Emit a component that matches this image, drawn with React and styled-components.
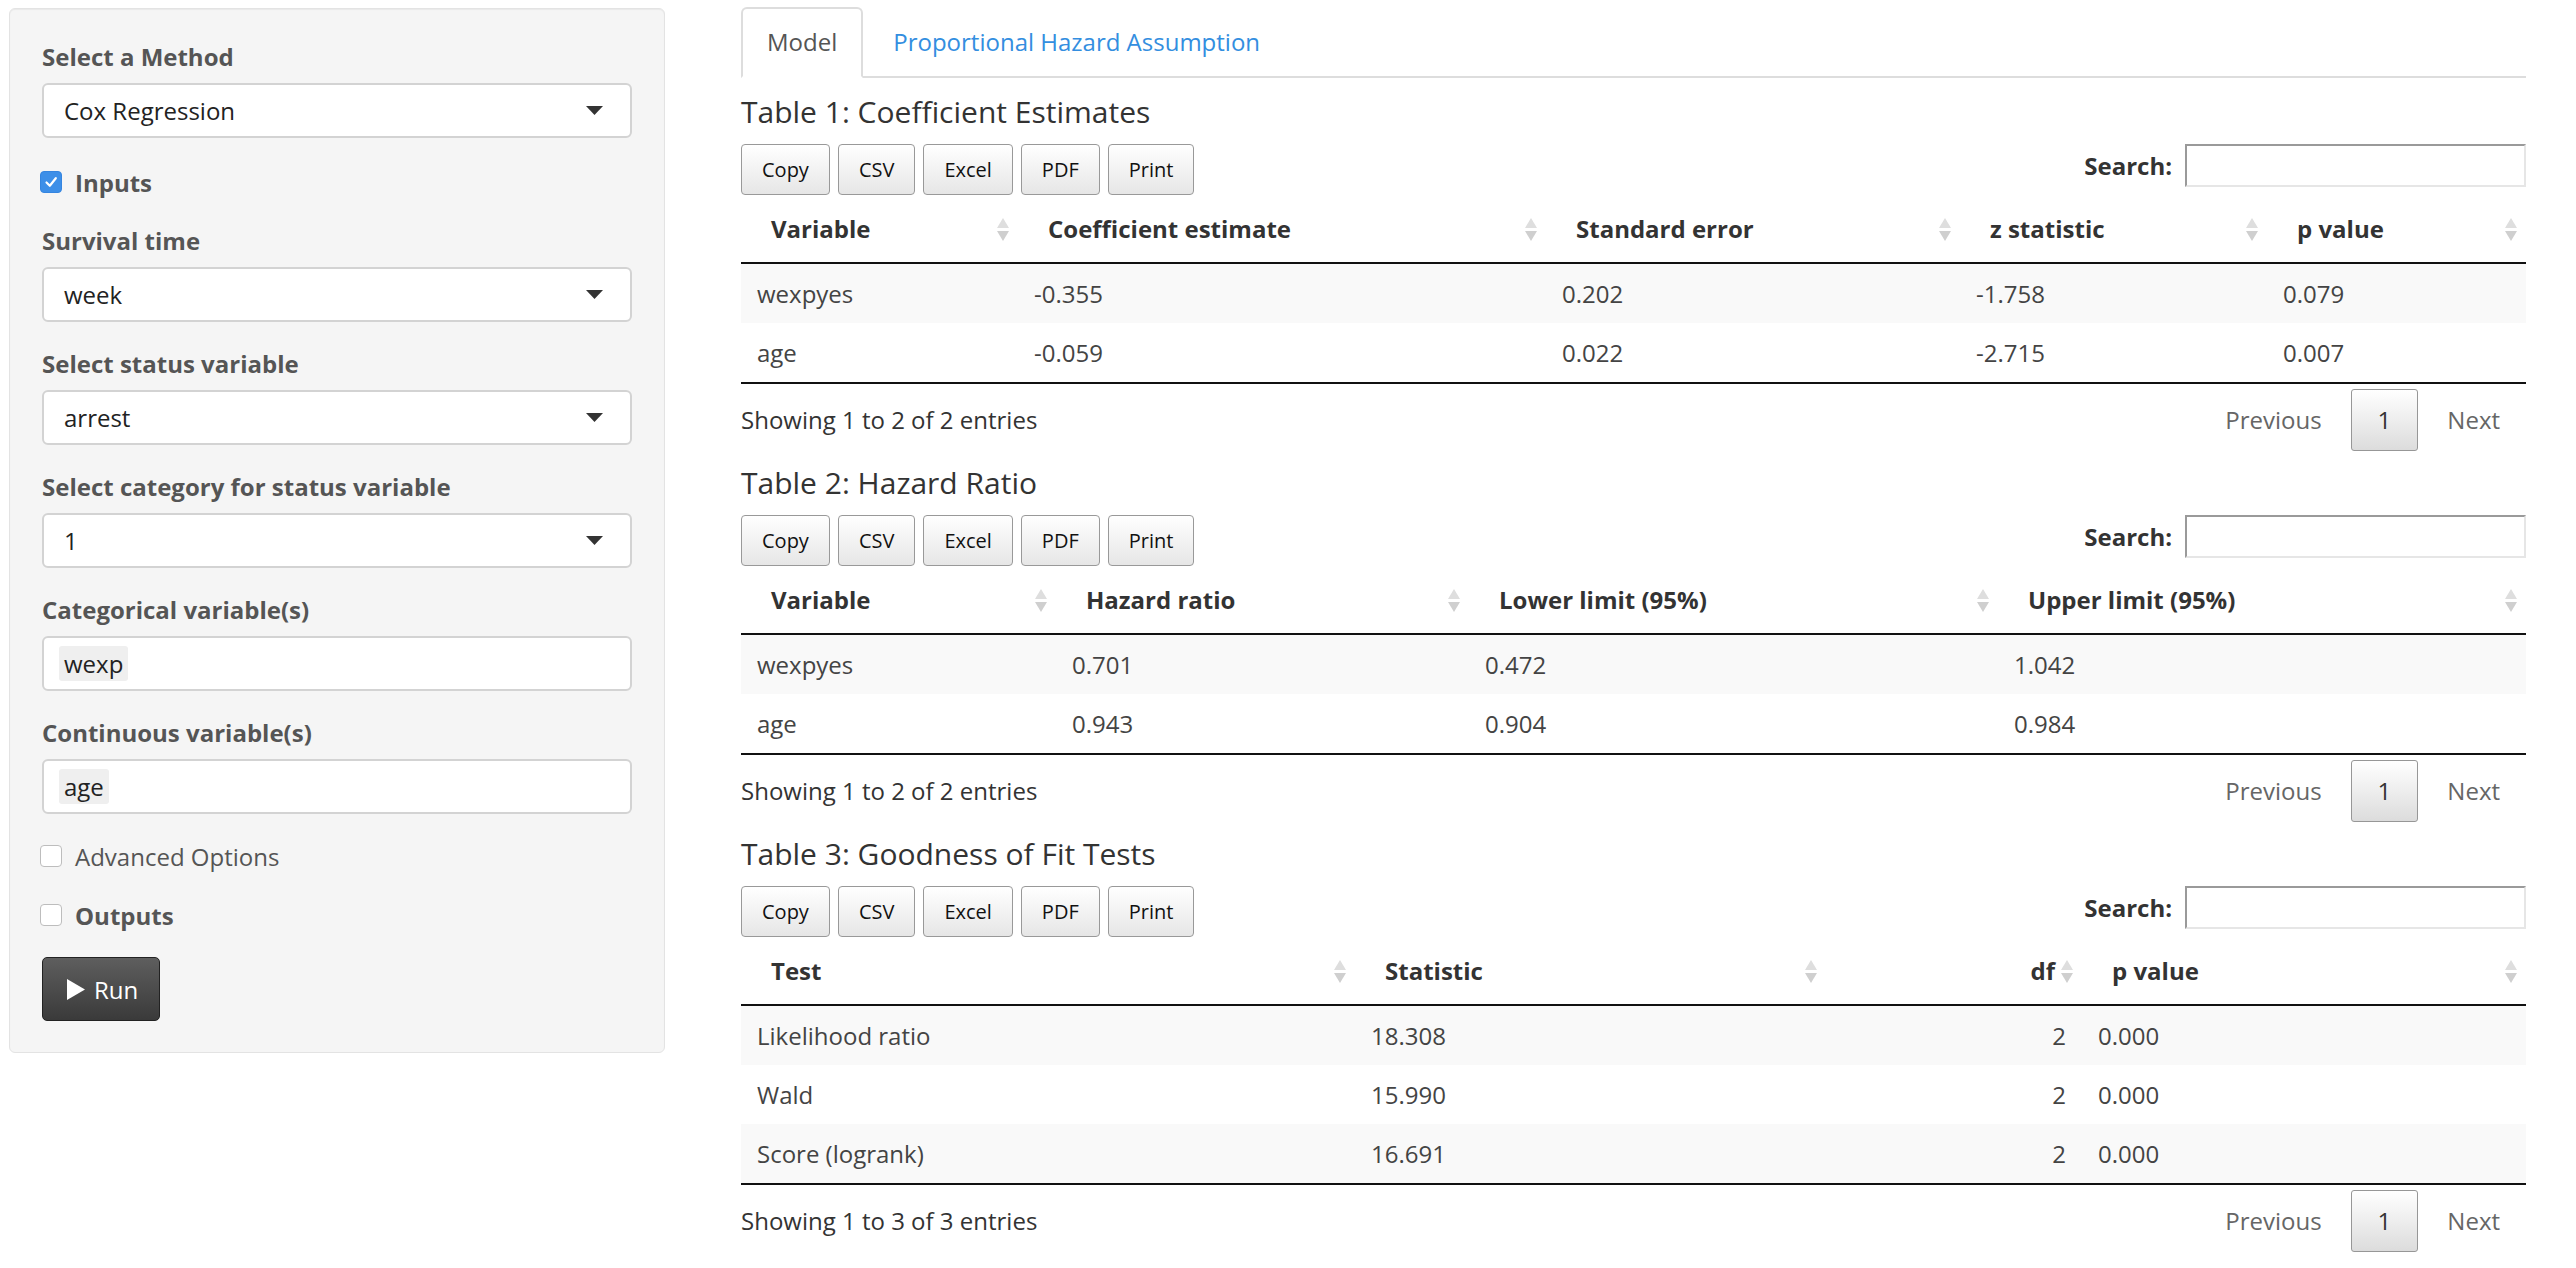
import React from 'react';
import styled, { createGlobalStyle, css } from 'styled-components';

const GlobalStyle = createGlobalStyle`
  html, body { margin: 0; padding: 0; background: #fff; }
  body {
    font-family: "Open Sans", "Liberation Sans", sans-serif;
    color: #333;
    font-size: 24px;
  }
  * { box-sizing: border-box; }
`;

const Page = styled.div`
  display: flex;
  align-items: flex-start;
  gap: 76px;
  padding: 7px 0 0 9px;
  width: 2576px;
  height: 1268px;
  overflow: hidden;
`;

/* ---------- Sidebar ---------- */
const Sidebar = styled.aside`
  flex: 0 0 656px;
  margin-top: 1px;
  background: #f5f5f5;
  border: 1px solid #e3e3e3;
  border-radius: 6px;
  box-shadow: inset 0 1px 1px rgba(0, 0, 0, 0.05);
  padding: 31px 32px;
  display: flex;
  flex-direction: column;
  gap: 25px;
`;

const FormGroup = styled.div`
  display: flex;
  flex-direction: column;
  gap: 9px;
`;

const Label = styled.div`
  font-weight: 700;
  line-height: 34px;
  color: #555;
`;

const SelectBox = styled.div`
  height: 55px;
  background: #fff;
  border: 2px solid #d3d3d3;
  border-radius: 6px;
  padding: 0 27px 0 20px;
  display: flex;
  align-items: center;
  justify-content: space-between;
  color: #222;
`;

const TagBox = styled.div`
  height: 55px;
  background: #fff;
  border: 2px solid #d3d3d3;
  border-radius: 6px;
  padding: 0 15px;
  display: flex;
  align-items: center;
`;

const Tag = styled.span`
  background: #efefef;
  border-radius: 3px;
  padding: 0 5px;
  line-height: 35px;
  color: #222;
`;

const CheckRow = styled.label`
  display: flex;
  align-items: center;
  gap: 13px;
  height: 34px;
  margin-top: ${p => p.$shift || 0}px;
  margin-left: -2px;
  color: #555;
  font-weight: ${p => (p.$bold ? 700 : 400)};
`;

const CheckBox = styled.span`
  width: 22px;
  height: 22px;
  border-radius: 4px;
  display: flex;
  align-items: center;
  justify-content: center;
  ${p =>
    p.$checked
      ? css`
          background: #3d8fe8;
          border: 1px solid #3585e0;
        `
      : css`
          background: #fff;
          border: 1px solid #bdbdbd;
        `}
`;

const RunButton = styled.button`
  align-self: flex-start;
  width: 118px;
  height: 64px;
  padding: 0 0 0 24px;
  display: flex;
  align-items: center;
  gap: 9px;
  font-family: "Open Sans", "Liberation Sans", sans-serif;
  font-size: 24px;
  color: #fff;
  background: linear-gradient(to bottom, #5e5e5e 0%, #3a3a3a 100%);
  border: 1px solid #222;
  border-radius: 5px;
`;

/* ---------- Main ---------- */
const Main = styled.main`
  flex: 0 0 1785px;
  display: flex;
  flex-direction: column;
`;

const TabBar = styled.nav`
  display: flex;
  gap: 4px;
  border-bottom: 2px solid #ddd;
`;

const Tab = styled.div`
  margin-bottom: -2px;
  padding: 16px 24px 17px;
  line-height: 34px;
  border: 2px solid transparent;
  border-radius: 6px 6px 0 0;
  ${p =>
    p.$active
      ? css`
          color: #555;
          background: #fff;
          border-color: #ddd #ddd transparent;
        `
      : css`
          color: #338ee0;
        `}
`;

const TabContent = styled.div`
  padding-top: 17px;
  display: flex;
  flex-direction: column;
  gap: 15px;
`;

const Section = styled.section`
  display: flex;
  flex-direction: column;
`;

const Title = styled.h4`
  margin: 0 0 15px;
  font-size: 30px;
  font-weight: 400;
  line-height: 34px;
  color: #333;
`;

const Toolbar = styled.div`
  display: flex;
  justify-content: space-between;
  align-items: flex-start;
  height: 51px;
`;

const BtnGroup = styled.div`
  display: flex;
  gap: 8px;
`;

const DtButton = styled.button`
  height: 51px;
  padding: 0 20px;
  font-family: "Open Sans", "Liberation Sans", sans-serif;
  font-size: 20px;
  color: #111;
  border: 1px solid #999;
  border-radius: 4px;
  background: linear-gradient(to bottom, #ffffff 0%, #e6e6e6 100%);
`;

const SearchWrap = styled.label`
  display: flex;
  align-items: center;
  gap: 13px;
  height: 43px;
  font-weight: 700;
  color: #333;
`;

const SearchInput = styled.input`
  width: 341px;
  height: 43px;
  border: 2px solid;
  border-color: #9a9a9a #e6e6e6 #e6e6e6 #9a9a9a;
  padding: 0 6px;
  background: #fff;
  font-size: 24px;
`;

const Table = styled.table`
  width: 100%;
  table-layout: fixed;
  border-collapse: separate;
  border-spacing: 0;
  border-bottom: 2px solid #111;
`;

const Col = styled.col`
  width: ${p => p.$w}px;
`;

const Th = styled.th`
  padding: 17px 9px 16px 30px;
  line-height: 34px;
  font-weight: 700;
  color: #333;
  text-align: left;
  border-bottom: 2px solid #111;
`;

const HeadInner = styled.div`
  display: flex;
  align-items: center;
  gap: 6px;
  justify-content: ${p => (p.$right ? 'flex-end' : 'space-between')};
`;

const Tr = styled.tr`
  background: ${p => (p.$odd ? '#f9f9f9' : '#fff')};
  & + & td {
    border-top: 1px solid #ddd;
  }
`;

const Td = styled.td`
  padding: 13px 16px 12px;
  line-height: 34px;
  color: #444;
  text-align: ${p => (p.$right ? 'right' : 'left')};
`;

const Footer = styled.div`
  display: flex;
  justify-content: space-between;
  align-items: flex-start;
`;

const Info = styled.div`
  padding-top: 19px;
  line-height: 34px;
  color: #333;
`;

const Paginate = styled.div`
  padding-top: 5px;
  display: flex;
`;

const PageBtn = styled.span`
  margin-left: 3px;
  padding: 13px 25px;
  line-height: 34px;
  border: 1px solid transparent;
  border-radius: 3px;
  color: #666;
  ${p =>
    p.$current &&
    css`
      padding: 13px 26px;
      color: #333;
      border-color: #979797;
      background: linear-gradient(to bottom, #ffffff 0%, #dcdcdc 100%);
    `}
`;

/* ---------- Icons ---------- */
const Caret = () => (
  <svg width="17" height="9" viewBox="0 0 17 9">
    <polygon points="0,0 17,0 8.5,9" fill="#333" />
  </svg>
);

const Check = () => (
  <svg width="16" height="16" viewBox="0 0 16 16">
    <path d="M3.5 8.5 L6.8 11.8 L12.8 4.2" stroke="#fff" strokeWidth="2.2" fill="none" strokeLinecap="round" strokeLinejoin="round" />
  </svg>
);

const Play = () => (
  <svg width="18" height="21" viewBox="0 0 18 21">
    <polygon points="0,0 18,10.5 0,21" fill="#fff" />
  </svg>
);

const SortIcon = () => (
  <svg width="12" height="23" viewBox="0 0 12 23">
    <polygon points="0,10 6,0 12,10" fill="#dedede" />
    <polygon points="0,13 12,13 6,23" fill="#cfcfcf" />
  </svg>
);

/* ---------- Data ---------- */
const tables = [
  {
    title: 'Table 1: Coefficient Estimates',
    widths: [277, 528, 414, 307, 259],
    heads: ['Variable', 'Coefficient estimate', 'Standard error', 'z statistic', 'p value'],
    right: [],
    rows: [
      ['wexpyes', '-0.355', '0.202', '-1.758', '0.079'],
      ['age', '-0.059', '0.022', '-2.715', '0.007'],
    ],
    info: 'Showing 1 to 2 of 2 entries',
  },
  {
    title: 'Table 2: Hazard Ratio',
    widths: [315, 413, 529, 528],
    heads: ['Variable', 'Hazard ratio', 'Lower limit (95%)', 'Upper limit (95%)'],
    right: [],
    rows: [
      ['wexpyes', '0.701', '0.472', '1.042'],
      ['age', '0.943', '0.904', '0.984'],
    ],
    info: 'Showing 1 to 2 of 2 entries',
  },
  {
    title: 'Table 3: Goodness of Fit Tests',
    widths: [614, 471, 256, 444],
    heads: ['Test', 'Statistic', 'df', 'p value'],
    right: [2],
    rows: [
      ['Likelihood ratio', '18.308', '2', '0.000'],
      ['Wald', '15.990', '2', '0.000'],
      ['Score (logrank)', '16.691', '2', '0.000'],
    ],
    info: 'Showing 1 to 3 of 3 entries',
  },
];

const selects = [
  { label: 'Survival time', value: 'week' },
  { label: 'Select status variable', value: 'arrest' },
  { label: 'Select category for status variable', value: '1' },
];

function DataTable({ t }) {
  return (
    <Section>
      <Title>{t.title}</Title>
      <Toolbar>
        <BtnGroup>
          {['Copy', 'CSV', 'Excel', 'PDF', 'Print'].map(b => (
            <DtButton key={b}>{b}</DtButton>
          ))}
        </BtnGroup>
        <SearchWrap>
          Search:
          <SearchInput type="search" />
        </SearchWrap>
      </Toolbar>
      <Table>
        <colgroup>
          {t.widths.map((w, i) => (
            <Col key={i} $w={w} />
          ))}
        </colgroup>
        <thead>
          <tr>
            {t.heads.map((h, i) => {
              const r = t.right.includes(i);
              return (
                <Th key={h}>
                  <HeadInner $right={r}>
                    <span>{h}</span>
                    <SortIcon />
                  </HeadInner>
                </Th>
              );
            })}
          </tr>
        </thead>
        <tbody>
          {t.rows.map((row, ri) => (
            <Tr key={ri} $odd={ri % 2 === 0}>
              {row.map((c, ci) => (
                <Td key={ci} $right={t.right.includes(ci)}>
                  {c}
                </Td>
              ))}
            </Tr>
          ))}
        </tbody>
      </Table>
      <Footer>
        <Info>{t.info}</Info>
        <Paginate>
          <PageBtn>Previous</PageBtn>
          <PageBtn $current>1</PageBtn>
          <PageBtn>Next</PageBtn>
        </Paginate>
      </Footer>
    </Section>
  );
}

export default function App() {
  return (
    <>
      <GlobalStyle />
      <Page>
        <Sidebar>
          <FormGroup>
            <Label>Select a Method</Label>
            <SelectBox>
              <span>Cox Regression</span>
              <Caret />
            </SelectBox>
          </FormGroup>
          <CheckRow $bold $shift={2}>
            <CheckBox $checked>
              <Check />
            </CheckBox>
            Inputs
          </CheckRow>
          {selects.map(s => (
            <FormGroup key={s.label}>
              <Label>{s.label}</Label>
              <SelectBox>
                <span>{s.value}</span>
                <Caret />
              </SelectBox>
            </FormGroup>
          ))}
          <FormGroup>
            <Label>Categorical variable(s)</Label>
            <TagBox>
              <Tag>wexp</Tag>
            </TagBox>
          </FormGroup>
          <FormGroup>
            <Label>Continuous variable(s)</Label>
            <TagBox>
              <Tag>age</Tag>
            </TagBox>
          </FormGroup>
          <CheckRow>
            <CheckBox />
            Advanced Options
          </CheckRow>
          <CheckRow $bold>
            <CheckBox />
            Outputs
          </CheckRow>
          <RunButton>
            <Play />
            Run
          </RunButton>
        </Sidebar>
        <Main>
          <TabBar>
            <Tab $active>Model</Tab>
            <Tab>Proportional Hazard Assumption</Tab>
          </TabBar>
          <TabContent>
            {tables.map(t => (
              <DataTable key={t.title} t={t} />
            ))}
          </TabContent>
        </Main>
      </Page>
    </>
  );
}
